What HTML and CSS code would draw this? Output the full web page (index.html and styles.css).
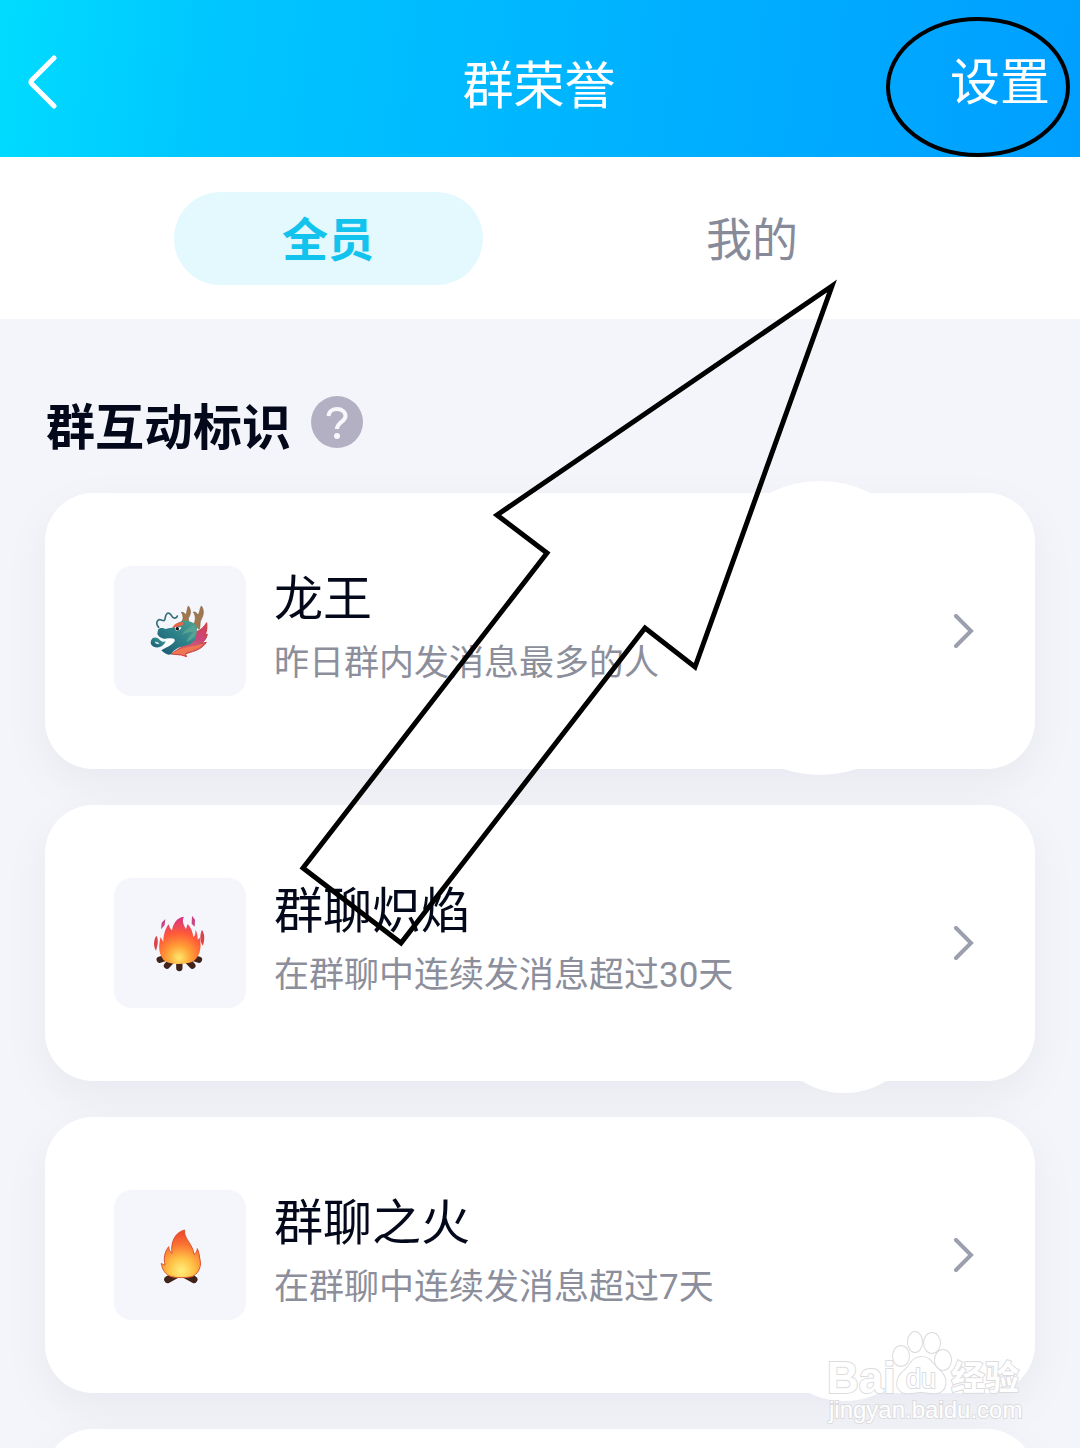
FILE: index.html
```
<!DOCTYPE html>
<html lang="zh-CN">
<head>
    <meta charset="UTF-8">
    <meta name="viewport" content="width=device-width, initial-scale=1.0">
    <title>群荣誉</title>
    <link rel="stylesheet" href="styles.css">
</head>
<body>

    <div class="page">
        <!-- Top bar -->
        <header class="topbar">
            <button class="back" type="button" aria-label="返回">
                <svg width="30" height="54" viewBox="0 0 30 54" fill="none" stroke="#fff" stroke-width="5" stroke-linecap="round" stroke-linejoin="round">
                    <path d="M26 3 L4 25 Q2 27 4 29 L26 51"/>
                </svg>
            </button>
            <h1 class="topbar-title">群荣誉</h1>
            <a class="settings" href="#">设置</a>
        </header>

        <!-- Tabs -->
        <nav class="tabs">
            <button class="tab active" type="button">全员</button>
            <button class="tab" type="button">我的</button>
        </nav>

        <main class="content">
            <div class="section-head">
                <h2>群互动标识</h2>
                <button class="help" type="button" aria-label="帮助">
                    <svg width="52" height="52" viewBox="0 0 52 52" fill="none">
                        <circle cx="26" cy="26" r="26" fill="#b4b0c3"/>
                        <path d="M17.5 20 C18 15 22 13 26 13 C31 13 34.5 16 34.5 20 C34.5 26 26 26 26 33" stroke="#f8f8fc" stroke-width="4"/>
                        <circle cx="26" cy="40" r="3" fill="#f8f8fc"/>
                    </svg>
                </button>
            </div>

            <div class="cards">
                <a class="card card-dragon" href="#">
                    <span class="badge">
                        <svg viewBox="42 54 396 390">
                            <defs>
                                <linearGradient id="scale" x1="0" y1="1" x2="1" y2="0">
                                    <stop offset="0" stop-color="#1b5570"/>
                                    <stop offset=".5" stop-color="#2b7f88"/>
                                    <stop offset="1" stop-color="#4fa394"/>
                                </linearGradient>
                                <linearGradient id="mane" x1="0" y1="0" x2="0" y2="1">
                                    <stop offset="0" stop-color="#dc3c4e"/>
                                    <stop offset=".5" stop-color="#c8487e"/>
                                    <stop offset="1" stop-color="#e8704c"/>
                                </linearGradient>
                            </defs>
                            <path fill="url(#mane)" stroke="#c83c3c" stroke-width="3" d="M288 252 C304 246 312 236 320 224 C322 240 320 252 314 264 L322 258 C320 272 312 280 304 286 L319 283 C308 300 290 308 270 313 L256 318 L260 326 L244 321 L214 318 C236 300 266 290 288 252Z"/>
                            <path fill="#ee7650" d="M216 317 C246 294 284 298 312 286 C300 302 280 308 258 313 L254 322 L240 318Z"/>
                            <path fill="#a07850" stroke="#84603c" stroke-width="2" d="M244 222 C252 214 250 202 244 193 C250 192 254 196 257 200 C262 194 260 184 265 174 C273 184 274 198 265 210 C264 218 270 224 266 234Z"/>
                            <path fill="#a07850" stroke="#84603c" stroke-width="2" d="M280 230 C288 218 288 204 280 192 C287 191 292 196 294 202 C300 194 299 182 304 174 C312 184 312 200 304 213 C298 222 302 232 298 244Z"/>
                            <path fill="url(#scale)" d="M174 246 C180 236 190 241 198 243 C210 238 216 244 224 232 C236 220 256 214 274 222 C288 228 296 240 288 252 C294 266 282 288 262 292 C240 296 222 304 214 318 C204 324 194 316 184 307 L200 298 C208 294 218 288 224 280 C228 270 212 270 204 271 C188 276 176 266 172 258Z"/>
                            <path fill="#57a393" d="M284 232 C268 236 256 246 246 260 C260 254 270 250 280 253 C270 262 264 270 260 282 C276 276 290 264 290 250Z"/>
                            <path fill="#fff" d="M186 292 C192 278 206 272 222 274 C224 284 210 292 198 298Z"/>
                            <path fill="#eb6448" d="M218 241 C220 228 236 220 252 224 C250 236 236 232 218 241Z"/>
                            <path fill="#fff" d="M224 238 L244 238 Q242 248 228 248Z"/>
                            <circle cx="232" cy="242" r="5" fill="#111"/>
                            <path fill="url(#scale)" d="M154 276 C158 266 172 266 180 276 C184 281 190 283 197 280 C191 296 174 302 161 296 C153 292 150 284 154 276Z"/>
                            <path fill="#d8edf2" d="M164 281 Q174 280 178 287 Q168 290 164 281Z"/>
                            <path fill="none" stroke="#35707a" stroke-width="5" stroke-linecap="round" d="M176 238 C164 224 174 212 184 216 C202 224 190 204 202 196 C214 190 212 208 222 210 Q230 212 232 204"/>
                        </svg>
                    </span>
                    <span class="info">
                        <span class="name">龙王</span>
                        <span class="desc">昨日群内发消息最多的人</span>
                    </span>
                    <svg class="arrow" width="20" height="34" viewBox="0 0 20 34"><path d="M2 2 L17 17 L2 32"/></svg>
                </a>

                <a class="card card-blaze" href="#">
                    <span class="badge">
                        <svg viewBox="42 39 396 390">
                            <defs>
                                <radialGradient id="blaze" gradientUnits="userSpaceOnUse" cx="237" cy="278" r="120">
                                    <stop offset="0" stop-color="#ffe76c"/>
                                    <stop offset=".3" stop-color="#ffa035"/>
                                    <stop offset=".62" stop-color="#ff5a38"/>
                                    <stop offset="1" stop-color="#d83482"/>
                                </radialGradient>
                            </defs>
                            <g stroke="#40231b" stroke-width="19" stroke-linecap="round">
                                <path d="M179 284 L205 276M201 302 L216 286M238 309 V290M277 302 L262 286M297 284 L270 276"/>
                            </g>
                            <path fill="url(#blaze)" d="M190 284 C174 264 176 238 182 216 C185 222 187 226 190 230 C190 210 196 190 206 178 C208 186 211 192 216 196 C220 174 230 158 252 155 C244 166 252 182 258 192 L263 177 C273 188 278 200 280 216 C286 212 287 204 286 194 C292 202 293 214 293 224 L300 218 C304 246 302 268 284 286 C268 300 208 302 190 284Z"/>
                            <path fill="#c84482" d="M196 162 L194 180 L183 193 L185 173ZM276 152 L285 164 L284 185 L275 176Z"/>
                            <path fill="#d9444c" d="M306 194 C315 208 314 224 309 242 C300 230 298 212 306 194ZM169 212 C176 222 174 240 168 257 C160 244 160 226 169 212Z"/>
                        </svg>
                    </span>
                    <span class="info">
                        <span class="name">群聊炽焰</span>
                        <span class="desc">在群聊中连续发消息超过30天</span>
                    </span>
                    <svg class="arrow" width="20" height="34" viewBox="0 0 20 34"><path d="M2 2 L17 17 L2 32"/></svg>
                </a>

                <a class="card card-fire" href="#">
                    <span class="badge">
                        <svg viewBox="42 42 396 390">
                            <defs>
                                <radialGradient id="fire" gradientUnits="userSpaceOnUse" cx="244" cy="284" r="112">
                                    <stop offset="0" stop-color="#fff07c"/>
                                    <stop offset=".35" stop-color="#ffc044"/>
                                    <stop offset=".7" stop-color="#fb7434"/>
                                    <stop offset="1" stop-color="#f04c2c"/>
                                </radialGradient>
                            </defs>
                            <path stroke="#40231b" stroke-width="21" stroke-linecap="round" d="M203 311 L230 296M282 311 L255 296"/>
                            <path fill="url(#fire)" stroke="#d9532c" stroke-width="3" stroke-linejoin="round" d="M214 302 C196 296 186 280 184 262 C188 265 192 267 195 267 C190 246 194 228 206 212 C207 222 210 228 216 232 C212 202 222 170 254 162 C250 188 278 202 282 235 C288 232 291 226 292 218 C298 230 298 244 301 256 C304 278 290 296 276 302 C256 306 232 306 214 302Z"/>
                        </svg>
                    </span>
                    <span class="info">
                        <span class="name">群聊之火</span>
                        <span class="desc">在群聊中连续发消息超过7天</span>
                    </span>
                    <svg class="arrow" width="20" height="34" viewBox="0 0 20 34"><path d="M2 2 L17 17 L2 32"/></svg>
                </a>

                <div class="card"></div>
            </div>
        </main>

        <!-- Hand-drawn marks pointing at the settings link -->
        <svg class="marks" viewBox="0 0 1080 1448" fill="none" stroke="#000" stroke-width="4">
            <ellipse cx="978" cy="87" rx="90" ry="68"/>
            <path stroke-width="5" d="M832 286 L497 515 L547 553 L303 868 L401 943 L645 628 L695 667Z"/>
        </svg>

        <!-- Watermark -->
        <svg class="watermark" width="200" height="100" viewBox="0 0 200 100">
            <g class="outline">
                <text x="1" y="65" font-size="44" font-weight="700">Bai</text>
                <ellipse cx="75" cy="28" rx="8" ry="10"/>
                <ellipse cx="89" cy="14" rx="7" ry="10"/>
                <ellipse cx="106" cy="15" rx="8" ry="10"/>
                <ellipse cx="117" cy="32" rx="8" ry="10"/>
                <path d="M95 29 C105 29 107 37 113 42 C121 48 122 60 114 64 C108 67 102 64 95 64 C88 64 82 67 76 64 C68 59 71 48 78 43 C84 38 86 29 95 29Z"/>
                <text x="80" y="60" font-size="27">du</text>
                <text class="cjk" x="125" y="62" font-size="34" font-weight="700">经验</text>
                <text x="3" y="90" font-size="24">jingyan.baidu.com</text>
            </g>
        </svg>
    </div>

</body>
</html>
```
FILE: styles.css
```
* {
    margin: 0;
    padding: 0;
    box-sizing: border-box;
}

body {
    font-family: Roboto, "Noto Sans CJK SC", sans-serif;
    background-color: #f4f5fa;
    color: #03081a;
}

a {
    color: inherit;
    text-decoration: none;
}

button {
    border: none;
    background: none;
    font-family: inherit;
    cursor: pointer;
}

svg {
    display: block;
}

.page {
    position: relative;
    height: 100vh;
    overflow: hidden;
}

/* Top bar */
.topbar {
    display: grid;
    grid-template-columns: 1fr auto 1fr;
    align-items: center;
    padding: 42px 30px 36px 28px;
    background: linear-gradient(97deg, #00dcff 0%, #00c6ff 20%, #00b1ff 60%, #009fff 100%);
    color: #fff;
}

.back {
    justify-self: start;
}

.topbar-title {
    padding-top: 10px;
    font-size: 51px;
    font-weight: 400;
    line-height: 69px;
}

.settings {
    justify-self: end;
    padding-top: 2px;
    font-size: 50px;
    line-height: 76px;
}

/* Tabs */
.tabs {
    display: flex;
    justify-content: center;
    gap: 115px;
    padding: 35px 24px 34px;
    background-color: #fff;
}

.tab {
    flex: 0 1 309px;
    height: 93px;
    padding-bottom: 6px;
    border-radius: 47px;
    font-size: 46px;
    color: #878b99;
}

.tab.active {
    background-color: #e3f9fe;
    color: #12c3ee;
    font-weight: 700;
}

/* Section */
.content {
    padding: 68px 45px 0;
}

.section-head {
    display: flex;
    align-items: center;
    gap: 20px;
    padding-left: 1px;
    margin-bottom: 36px;
}

.section-head h2 {
    padding-top: 14px;
    font-size: 49px;
    font-weight: 700;
    line-height: 56px;
}

.cards {
    display: flex;
    flex-direction: column;
    gap: 36px;
}

.card {
    position: relative;
    display: flex;
    align-items: center;
    gap: 28px;
    min-height: 276px;
    padding: 0 61px 0 69px;
    border-radius: 48px;
    background-color: #fff;
    box-shadow: 0 16px 48px rgba(20, 20, 50, 0.05);
}

/* White bulge behind the card edge */
.card-dragon::before,
.card-blaze::before,
.card-fire::before {
    content: "";
    position: absolute;
    border-radius: 50%;
    background-color: #fff;
}

.card-dragon::before {
    right: 87px;
    top: -12px;
    bottom: -6px;
    width: 256px;
}

.card-blaze::before {
    right: 111px;
    bottom: -12px;
    width: 160px;
    height: 160px;
}

.card-fire::before {
    right: 111px;
    bottom: -8px;
    width: 160px;
    height: 160px;
}

.badge {
    flex: none;
    width: 132px;
    height: 130px;
    border-radius: 18px;
    background-color: #f4f6fb;
}

.info {
    flex: 1;
    position: relative;
    padding-top: 4px;
}

.name,
.desc {
    display: block;
}

.name {
    font-size: 49px;
    line-height: 62px;
}

.desc {
    font-size: 35px;
    line-height: 66px;
    color: #8c8f9b;
}

.arrow {
    position: relative;
    fill: none;
    stroke: #9b9fae;
    stroke-width: 4;
    stroke-linecap: round;
}

/* Marks and watermark lie over the page */
.marks {
    position: absolute;
    top: 0;
    left: 0;
    width: 100%;
    pointer-events: none;
}

.watermark {
    position: absolute;
    right: 54px;
    bottom: 20px;
    font-family: "Liberation Sans", sans-serif;
    pointer-events: none;
}

.outline {
    fill: #fff;
    stroke: #dcdcdf;
    stroke-width: 2;
    paint-order: stroke;
}

.cjk {
    font-family: "Noto Sans CJK SC", sans-serif;
}
```
